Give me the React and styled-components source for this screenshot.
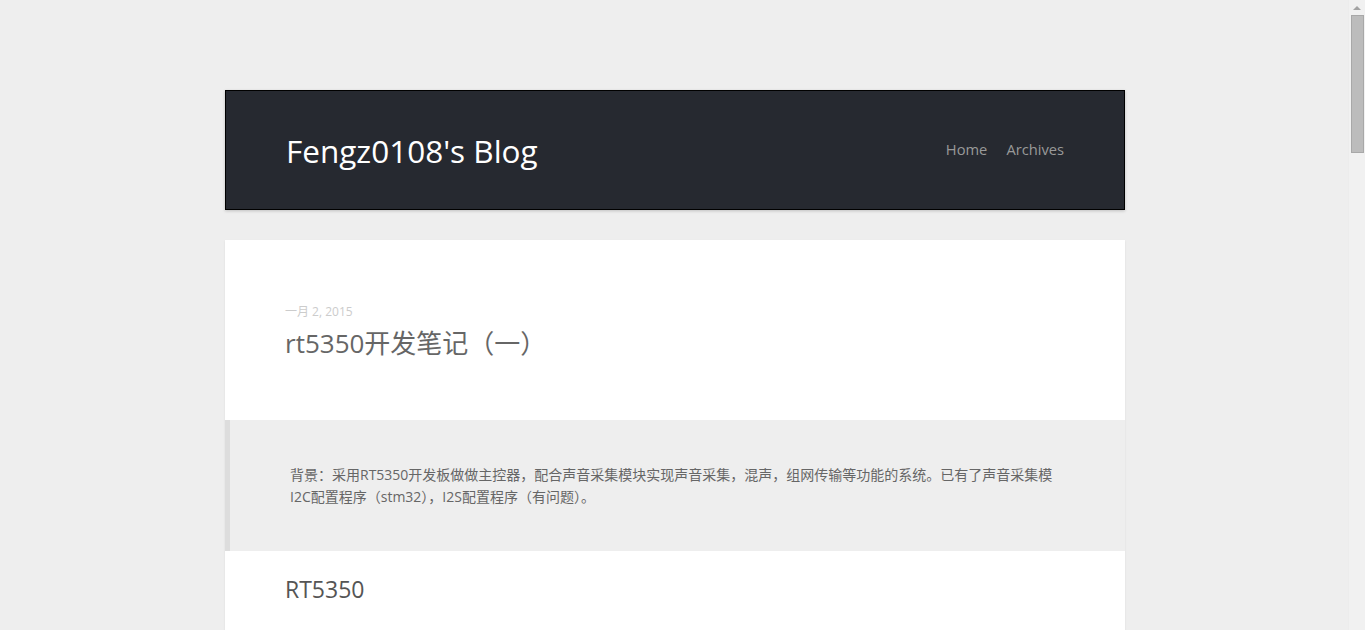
import React from 'react';
import styled, { createGlobalStyle } from 'styled-components';

const GlobalStyle = createGlobalStyle`
  html, body {
    margin: 0;
    padding: 0;
    background: #eeeeee;
  }
  body {
    font-family: "Open Sans", "Noto Sans CJK SC", sans-serif;
    color: #666;
  }
`;

const Shell = styled.div`
  display: flex;
  height: 100vh;
  overflow: hidden;
`;

const Viewport = styled.main`
  flex: 1;
  min-width: 0;
  padding-left: 2px;
`;

const Scrollbar = styled.div`
  display: flex;
  flex-direction: column;
  align-items: center;
  width: 17px;
  flex-shrink: 0;
  background: #f1f1f1;
  border-left: 1px solid #ececec;
  box-sizing: border-box;
`;

const ScrollArrow = styled.div`
  width: 0;
  height: 0;
  margin: 6px 0 5px;
  border-left: 4px solid transparent;
  border-right: 4px solid transparent;
  border-bottom: 4px solid #a3a3a3;
`;

const ScrollThumb = styled.div`
  width: 13px;
  height: 138px;
  margin-left: 1px;
  background: #bcbcbc;
  border: 1px solid #a8a8a8;
  box-sizing: border-box;
`;

const Page = styled.div`
  width: 900px;
  margin: 0 auto;
  padding-top: 90px;
`;

const Header = styled.header`
  display: flex;
  align-items: center;
  justify-content: space-between;
  height: 118px;
  padding: 0 60px;
  background: #262930;
  border: 1px solid #000;
  box-shadow: 0 1px 3px rgba(0, 0, 0, 0.2);
`;

const BlogTitle = styled.a`
  color: #fff;
  font-size: 31.5px;
  font-weight: 400;
  text-decoration: none;
  margin-top: 1px;
`;

const Nav = styled.nav`
  display: flex;
  gap: 19px;
  margin-top: -3px;
`;

const NavLink = styled.a`
  color: #999;
  font-size: 14.7px;
  text-decoration: none;
`;

const Article = styled.article`
  margin-top: 30px;
  background: #fff;
  box-shadow: 0 1px 2px rgba(0, 0, 0, 0.08);
`;

const ArticleHead = styled.div`
  padding: 62px 60px 59px;
`;

const PostDate = styled.time`
  display: block;
  color: #ccc;
  font-size: 12px;
`;

const PostTitle = styled.h1`
  margin: 3px 0 0;
  font-size: 26px;
  font-weight: 400;
  color: #666;
`;

const Quote = styled.blockquote`
  margin: 0;
  padding: 44px 40px 43px 60px;
  background: #eee;
  border-left: 5px solid #ddd;
  font-size: 14px;
  line-height: 22px;
  color: #666;
`;

const SectionTitle = styled.h2`
  margin: 0;
  padding: 22px 60px 40px;
  font-size: 23px;
  font-weight: 400;
  color: #555;
`;

export default function App() {
  return (
    <>
      <GlobalStyle />
      <Shell>
        <Viewport>
          <Page>
            <Header>
              <BlogTitle href="#">Fengz0108's Blog</BlogTitle>
              <Nav>
                <NavLink href="#">Home</NavLink>
                <NavLink href="#">Archives</NavLink>
              </Nav>
            </Header>
            <Article>
              <ArticleHead>
                <PostDate>一月 2, 2015</PostDate>
                <PostTitle>rt5350开发笔记（一）</PostTitle>
              </ArticleHead>
              <Quote>
                背景：采用RT5350开发板做做主控器，配合声音采集模块实现声音采集，混声，组网传输等功能的系统。已有了声音采集模<br />
                I2C配置程序（stm32），I2S配置程序（有问题）。
              </Quote>
              <SectionTitle>RT5350</SectionTitle>
            </Article>
          </Page>
        </Viewport>
        <Scrollbar>
          <ScrollArrow />
          <ScrollThumb />
        </Scrollbar>
      </Shell>
    </>
  );
}
